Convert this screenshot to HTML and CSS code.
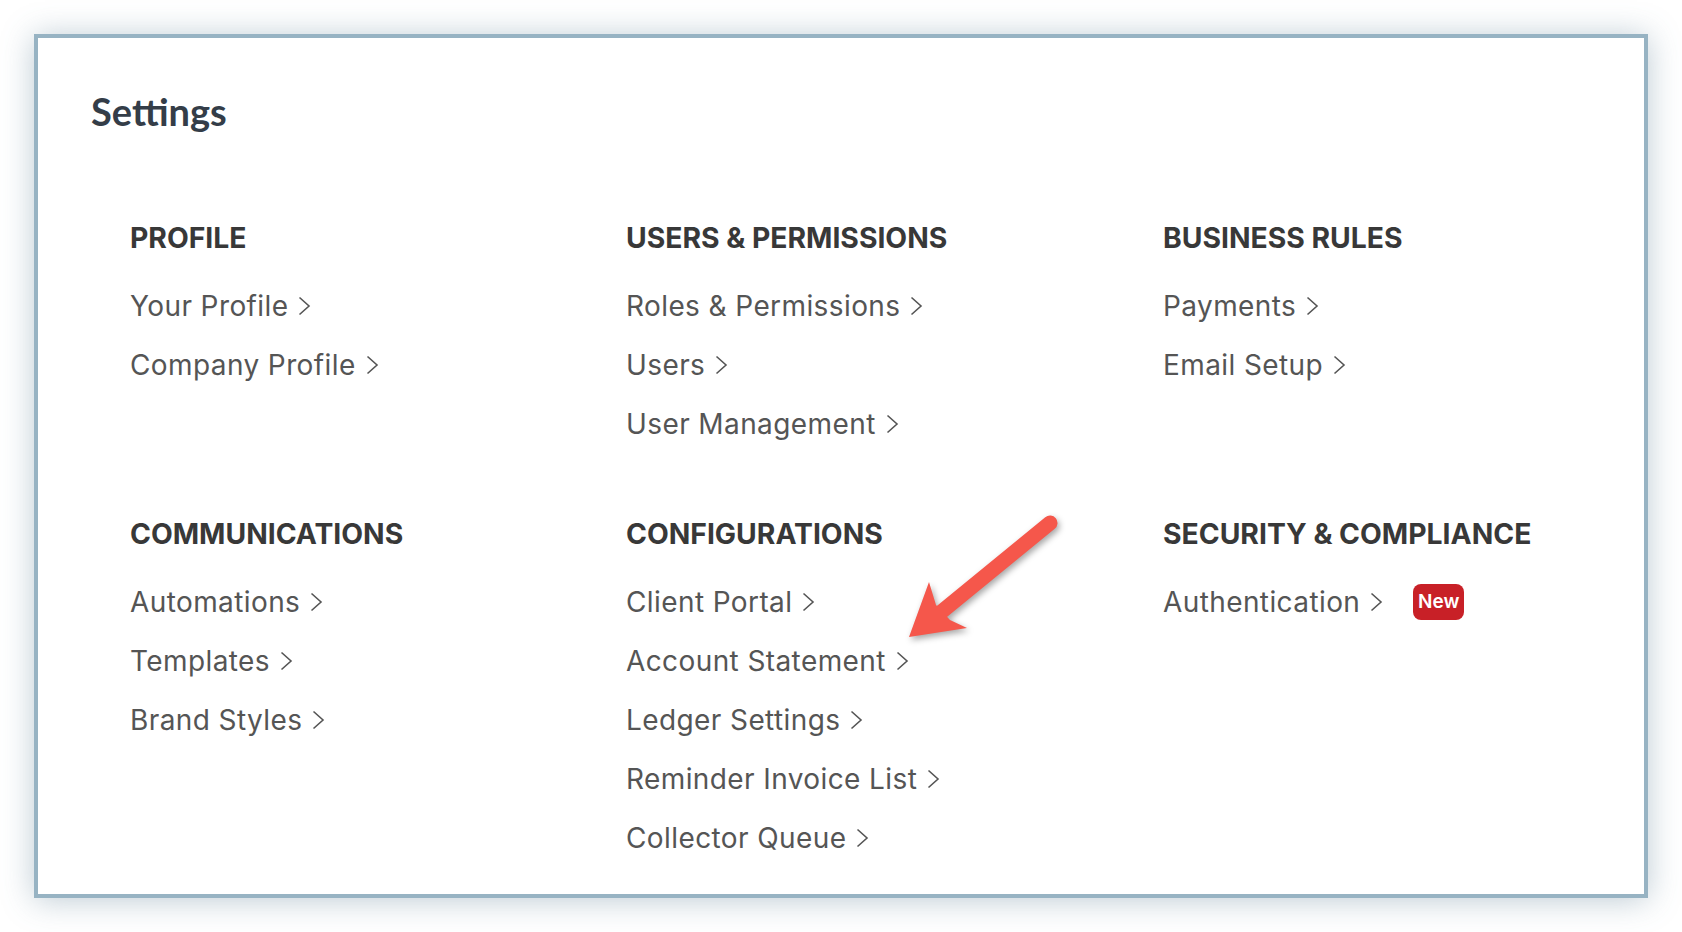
FILE: index.html
```html
<!DOCTYPE html>
<html lang="en">
<head>
<meta charset="utf-8">
<title>Settings</title>
<link rel="stylesheet" href="styles.css">
</head>
<body>
<div class="frame">
  <h1 class="title">Settings</h1>
  <div class="grid">
    <section class="group">
      <h2 class="group-title">PROFILE</h2>
      <ul class="links">
        <li><a class="link" href="#">Your Profile<svg class="chev" viewBox="0 0 13 20"><path d="M1.5 1.5 L11 10 L1.5 18.5"/></svg></a></li>
        <li><a class="link" href="#">Company Profile<svg class="chev" viewBox="0 0 13 20"><path d="M1.5 1.5 L11 10 L1.5 18.5"/></svg></a></li>
      </ul>
    </section>
    <section class="group">
      <h2 class="group-title">USERS &amp; PERMISSIONS</h2>
      <ul class="links">
        <li><a class="link" href="#">Roles &amp; Permissions<svg class="chev" viewBox="0 0 13 20"><path d="M1.5 1.5 L11 10 L1.5 18.5"/></svg></a></li>
        <li><a class="link" href="#">Users<svg class="chev" viewBox="0 0 13 20"><path d="M1.5 1.5 L11 10 L1.5 18.5"/></svg></a></li>
        <li><a class="link" href="#">User Management<svg class="chev" viewBox="0 0 13 20"><path d="M1.5 1.5 L11 10 L1.5 18.5"/></svg></a></li>
      </ul>
    </section>
    <section class="group">
      <h2 class="group-title">BUSINESS RULES</h2>
      <ul class="links">
        <li><a class="link" href="#">Payments<svg class="chev" viewBox="0 0 13 20"><path d="M1.5 1.5 L11 10 L1.5 18.5"/></svg></a></li>
        <li><a class="link" href="#">Email Setup<svg class="chev" viewBox="0 0 13 20"><path d="M1.5 1.5 L11 10 L1.5 18.5"/></svg></a></li>
      </ul>
    </section>
    <section class="group">
      <h2 class="group-title">COMMUNICATIONS</h2>
      <ul class="links">
        <li><a class="link" href="#">Automations<svg class="chev" viewBox="0 0 13 20"><path d="M1.5 1.5 L11 10 L1.5 18.5"/></svg></a></li>
        <li><a class="link" href="#">Templates<svg class="chev" viewBox="0 0 13 20"><path d="M1.5 1.5 L11 10 L1.5 18.5"/></svg></a></li>
        <li><a class="link" href="#">Brand Styles<svg class="chev" viewBox="0 0 13 20"><path d="M1.5 1.5 L11 10 L1.5 18.5"/></svg></a></li>
      </ul>
    </section>
    <section class="group">
      <h2 class="group-title">CONFIGURATIONS</h2>
      <ul class="links">
        <li><a class="link" href="#">Client Portal<svg class="chev" viewBox="0 0 13 20"><path d="M1.5 1.5 L11 10 L1.5 18.5"/></svg></a></li>
        <li><a class="link" href="#">Account Statement<svg class="chev" viewBox="0 0 13 20"><path d="M1.5 1.5 L11 10 L1.5 18.5"/></svg></a></li>
        <li><a class="link" href="#">Ledger Settings<svg class="chev" viewBox="0 0 13 20"><path d="M1.5 1.5 L11 10 L1.5 18.5"/></svg></a></li>
        <li><a class="link" href="#">Reminder Invoice List<svg class="chev" viewBox="0 0 13 20"><path d="M1.5 1.5 L11 10 L1.5 18.5"/></svg></a></li>
        <li><a class="link" href="#">Collector Queue<svg class="chev" viewBox="0 0 13 20"><path d="M1.5 1.5 L11 10 L1.5 18.5"/></svg></a></li>
      </ul>
    </section>
    <section class="group">
      <h2 class="group-title">SECURITY &amp; COMPLIANCE</h2>
      <ul class="links">
        <li><a class="link" href="#">Authentication<svg class="chev" viewBox="0 0 13 20"><path d="M1.5 1.5 L11 10 L1.5 18.5"/></svg></a><span class="badge">New</span></li>
      </ul>
    </section>
  </div>
  <svg class="arrow" viewBox="0 0 190 150" width="190" height="150">
    <line x1="170" y1="23" x2="60" y2="113" stroke="#f5574b" stroke-width="15" stroke-linecap="round"/>
    <polygon points="29,137 49,82 56,105 70,120 87,128" fill="#f5574b"/>
  </svg>
</div>
</body>
</html>
```

FILE: styles.css
```css
* { box-sizing: border-box; }

html, body {
  margin: 0;
  padding: 0;
  background: #ffffff;
}

body {
  padding: 34px;
  font-family: Inter, "Noto Sans", "Liberation Sans", sans-serif;
}

.frame {
  position: relative;
  width: 1614px;
  height: 864px;
  border: 4px solid #97b3c3;
  background: #ffffff;
  box-shadow: 0 2px 30px rgba(80, 115, 140, 0.38);
  padding: 51px 0 0 53px;
}

.title {
  margin: 0;
  font-family: Lato, "Open Sans", sans-serif;
  font-weight: 700;
  font-size: 38px;
  line-height: 44px;
  color: #343d48;
}

.grid {
  display: grid;
  grid-template-columns: 496px 537px 1fr;
  row-gap: 61px;
  margin: 85px 0 0 39px;
}

.group-title {
  margin: 0 0 18px;
  font-size: 28.3px;
  font-weight: 700;
  line-height: 40px;
  color: #383838;
  letter-spacing: 0;
}

.links {
  list-style: none;
  margin: 0;
  padding: 0;
}

.links li {
  display: flex;
  align-items: center;
  height: 59px;
}

.link {
  display: inline-flex;
  align-items: center;
  gap: 10px;
  font-size: 28px;
  letter-spacing: 0.4px;
  color: #555555;
  text-decoration: none;
}

.chev {
  width: 13px;
  height: 20px;
  fill: none;
  stroke: #555555;
  stroke-width: 1.6;
  margin-top: 1px;
}

.badge {
  margin-left: 30px;
  display: inline-flex;
  align-items: center;
  justify-content: center;
  width: 51px;
  height: 36px;
  border-radius: 8px;
  background: #c82027;
  color: #ffffff;
  font-size: 19px;
  font-weight: 600;
}

.arrow {
  position: absolute;
  left: 842px;
  top: 462px;
  overflow: visible;
  filter: drop-shadow(2px 3px 3px rgba(0, 0, 0, 0.35));
}
```
